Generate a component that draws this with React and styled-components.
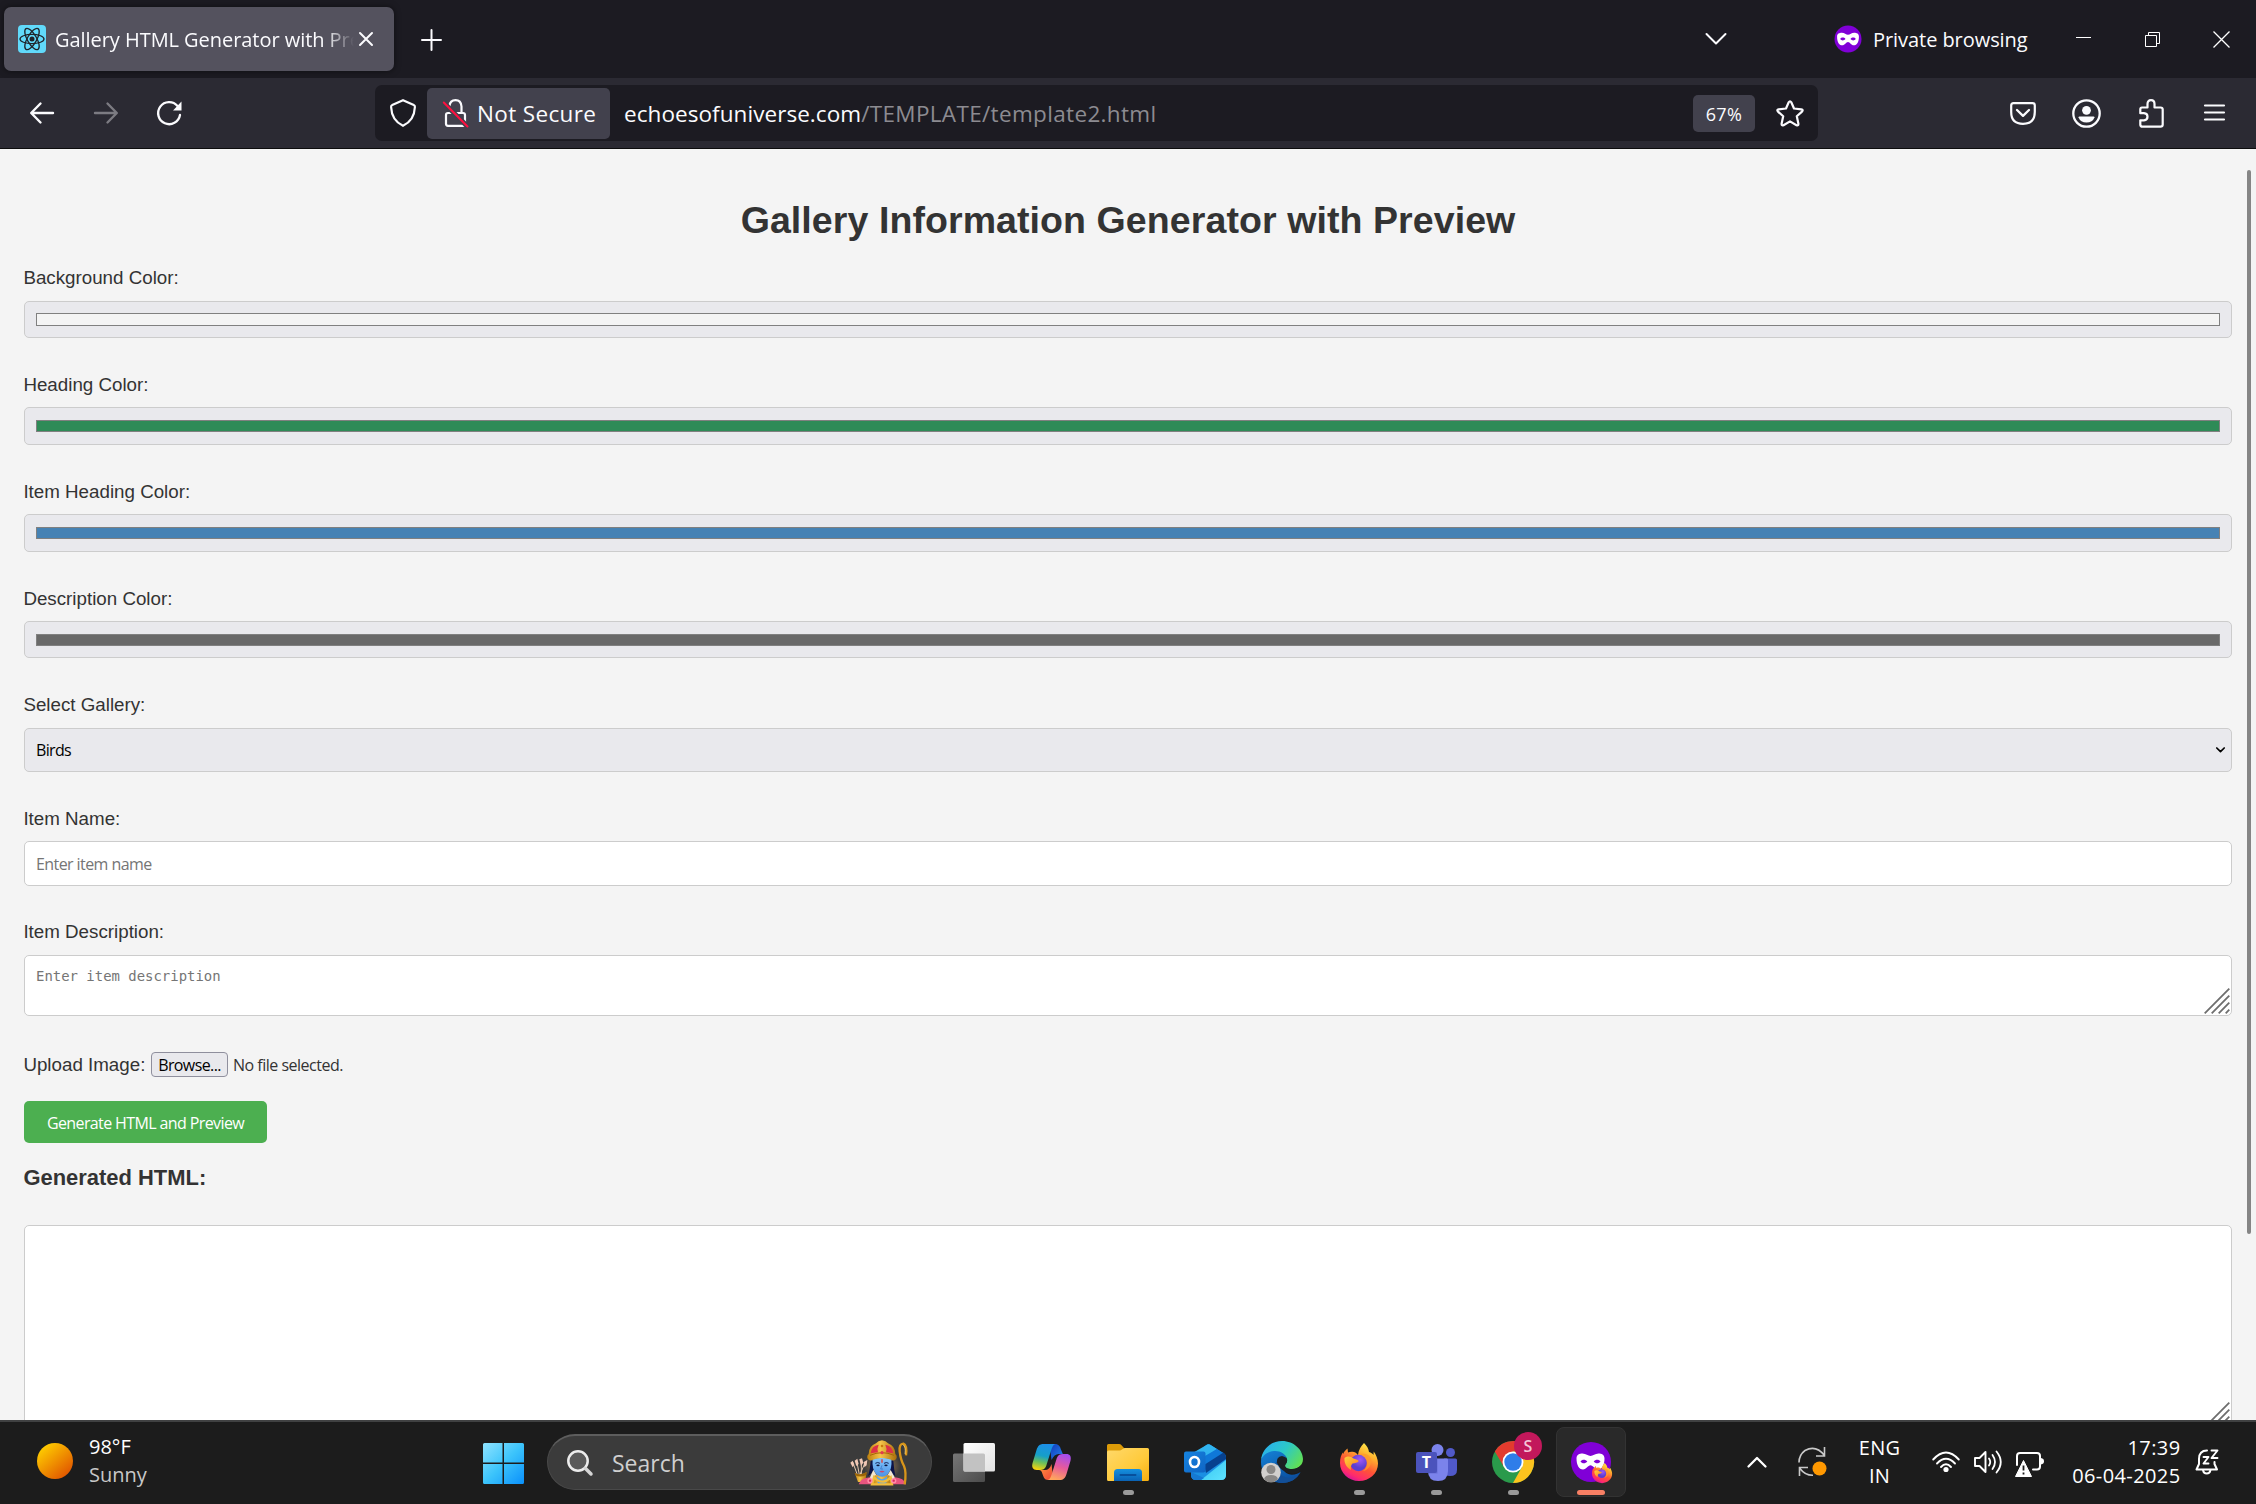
import React from "react";
import styled, { createGlobalStyle } from "styled-components";

const UI = `"Open Sans", "Noto Sans", sans-serif`;
const ARIAL = `"Liberation Sans", Arial, sans-serif`;

const GlobalStyle = createGlobalStyle`
  *, *::before, *::after { box-sizing: border-box; }
  body { margin: 0; background: #1c1c1c; overflow: hidden; }
`;

/* ---------- shell ---------- */

const Screen = styled.div`
  display: flex;
  flex-direction: column;
  width: 2256px;
  height: 1504px;
  overflow: hidden;
  font-family: ${UI};
`;

const Icon = styled.svg`
  display: block;
  flex: none;
  overflow: visible;
  margin-left: ${(p) => p.$ml || 0}px;
  margin-top: ${(p) => p.$mt || 0}px;
`;

/* ---------- title bar ---------- */

const TitleBar = styled.header`
  display: flex;
  align-items: center;
  height: 78px;
  flex: none;
  background: #1c1b22;
  color: #fbfbfe;
`;

const Tab = styled.div`
  display: flex;
  align-items: center;
  width: 390px;
  height: 64px;
  margin-left: 4px;
  padding-left: 14px;
  border-radius: 7px;
  background: #54525e;
  box-shadow: 0 0 6px rgba(0, 0, 0, 0.5);
`;

const TabTitle = styled.span`
  width: 300px;
  margin: 2px 0 0 9px;
  overflow: hidden;
  white-space: nowrap;
  font-size: 20px;
  letter-spacing: -0.05px;
  line-height: 30px;
  mask-image: linear-gradient(to right, #000 270px, transparent 299px);
`;

const PrivateLabel = styled.span`
  width: 155px;
  margin: 1px 0 0 11px;
  white-space: nowrap;
  font-size: 20px;
  letter-spacing: -0.06px;
  line-height: 30px;
`;

/* ---------- navigation bar ---------- */

const NavBar = styled.nav`
  display: flex;
  align-items: center;
  height: 71px;
  flex: none;
  padding-left: 30px;
  background: #2b2a33;
  border-bottom: 1px solid #0c0c0d;
  color: #fbfbfe;
`;

const UrlBar = styled.div`
  display: flex;
  align-items: center;
  width: 1443px;
  height: 56px;
  margin-left: 193px;
  padding: 0 14px 0 15px;
  border-radius: 7px;
  background: #1c1b22;
`;

const SecurityChip = styled.div`
  display: flex;
  align-items: center;
  width: 183px;
  height: 51px;
  margin-left: 11px;
  padding-left: 16px;
  border-radius: 5px;
  background: #42414d;
  font-size: 22.5px;
  line-height: 32px;
  white-space: nowrap;
  letter-spacing: 0.35px;
`;

const ChipText = styled.span`
  margin: 2px 0 0 8px;
`;

const Url = styled.span`
  margin: 2px 0 0 14px;
  font-size: 22.5px;
  line-height: 32px;
  white-space: nowrap;
  letter-spacing: 0.06px;
`;

const UrlPath = styled.span`
  color: #8c8b91;
  letter-spacing: 0.34px;
`;

const ZoomChip = styled.div`
  display: flex;
  align-items: center;
  justify-content: center;
  width: 62px;
  height: 37px;
  margin-left: auto;
  padding-top: 2px;
  border-radius: 5px;
  background: #42414d;
  font-size: 18px;
  letter-spacing: 0.4px;
`;

/* ---------- page ---------- */

const Viewport = styled.main`
  display: flex;
  height: 1271px;
  flex: none;
  overflow: hidden;
  background: #f4f4f4;
  color: #333;
  font-family: ${ARIAL};
`;

const Page = styled.div`
  width: 2232px;
  flex: none;
  padding: 50px 0 0 24px;
`;

const ScrollThumb = styled.div`
  width: 4px;
  height: 1064px;
  margin: 21px 0 0 15px;
  border-radius: 2px;
  background: #858585;
`;

const Title = styled.h1`
  margin: 0 0 26px;
  text-align: center;
  font-size: 37.52px;
  letter-spacing: 0.08px;
  line-height: 42px;
`;

const Field = styled.div`
  margin-bottom: ${(p) => p.$after}px;
`;

const Label = styled.label`
  display: block;
  height: 34px;
  margin-left: -0.6px;
  font-size: 18.76px;
  line-height: ${(p) => (p.$low ? 24 : 22)}px;
`;

const ColorBox = styled.div`
  height: ${(p) => p.$h}px;
  padding: ${(p) => p.$top}px 11px 0;
  border: 1px solid #ccc;
  border-radius: 5px;
  background: #e9e9ed;
`;

const Swatch = styled.div`
  height: ${(p) => p.$h}px;
  border: 1px solid #808080;
  background: ${(p) => p.$color};
`;

const SelectBox = styled.div`
  display: flex;
  align-items: center;
  justify-content: space-between;
  height: 44px;
  padding: 0 6px 0 11px;
  border: 1px solid #ccc;
  border-radius: 5px;
  background: #e9e9ed;
  color: #000;
  font-family: ${UI};
  font-size: 16px;
  letter-spacing: -0.65px;
`;

const TextInput = styled.input`
  display: block;
  width: 100%;
  height: 45px;
  padding: 1px 11px 0;
  border: 1px solid #ccc;
  border-radius: 5px;
  background: #fff;
  font-family: ${UI};
  font-size: 16px;
  letter-spacing: -0.58px;
  &::placeholder { color: #757575; opacity: 1; }
`;

const AreaWrap = styled.div`
  position: relative;
`;

const TextArea = styled.textarea`
  display: block;
  width: 100%;
  height: ${(p) => p.$h}px;
  padding: 11px;
  border: 1px solid #ccc;
  border-radius: 5px;
  background: #fff;
  resize: none;
  overflow: hidden;
  font-family: "DejaVu Sans Mono", monospace;
  font-size: 13.95px;
  line-height: 18px;
  &::placeholder { color: #757575; opacity: 1; }
`;

const Grip = styled.svg`
  position: absolute;
  right: 2px;
  bottom: 2px;
`;

const UploadRow = styled.div`
  display: flex;
  align-items: center;
  height: 25px;
  margin-bottom: 24px;
  font-size: 18.76px;
  line-height: 25px;
`;

const UploadLabel = styled.label`
  width: 127.6px;
  margin-left: -0.6px;
`;

const BrowseButton = styled.button`
  width: 77px;
  height: 25px;
  padding: 0;
  border: 1px solid #8f8f9d;
  border-radius: 4px;
  background: #e9e9ed;
  color: #000;
  font-family: ${UI};
  font-size: 16px;
  line-height: 22px;
  letter-spacing: -0.6px;
`;

const FileStatus = styled.span`
  margin: 1px 0 0 5px;
  font-family: ${UI};
  font-size: 16px;
  letter-spacing: -0.5px;
`;

const GenerateButton = styled.button`
  display: block;
  width: 243px;
  height: 42px;
  padding: 1px 0 0;
  border: 0;
  border-radius: 5px;
  background: #4caf50;
  color: #fff;
  font-family: ${UI};
  font-size: 16px;
  letter-spacing: -0.61px;
  white-space: nowrap;
`;

const SubTitle = styled.h3`
  margin: 22px 0 34px -0.6px;
  font-size: 21.95px;
  line-height: 26px;
`;

/* ---------- task bar ---------- */

const TaskBar = styled.footer`
  display: flex;
  align-items: center;
  height: 84px;
  flex: none;
  padding-bottom: 2px;
  border-top: 2px solid #404142;
  background: #1c1c1c;
  color: #fff;
`;

const Weather = styled.div`
  display: flex;
  align-items: center;
  width: 446px;
  padding-left: 37px;
`;

const Lines = styled.div`
  display: flex;
  flex-direction: column;
  width: ${(p) => p.$w}px;
  margin-left: ${(p) => p.$ml}px;
  margin-top: ${(p) => p.$mt || 0}px;
  align-items: ${(p) => p.$align || "flex-start"};
  font-size: 20px;
  line-height: 28px;
  letter-spacing: ${(p) => p.$ls || 0}px;
  white-space: nowrap;
`;

const Muted = styled.span`
  color: #c8c8c8;
`;

const SearchBox = styled.div`
  display: flex;
  align-items: center;
  width: 385px;
  height: 56px;
  margin-left: 23px;
  padding-left: 19px;
  border: 1px solid #494949;
  border-top: 2px solid #5d5d5d;
  border-radius: 28px;
  background: #3b3b3b;
`;

const SearchText = styled.span`
  width: 238px;
  margin-left: 19px;
  font-size: 23px;
  color: #cfcfcf;
`;

const AppBar = styled.div`
  display: flex;
  align-items: center;
  margin-left: 3.5px;
`;

const AppSlot = styled.div`
  display: flex;
  flex-direction: column;
  align-items: center;
  justify-content: space-between;
  width: ${(p) => (p.$active ? 70 : 77)}px;
  height: 70px;
  margin: ${(p) => (p.$active ? "0 3px 0 4px" : 0)};
  padding: ${(p) => (p.$active ? "13px 0 1px" : "14px 0 2px")};
  border: ${(p) => (p.$active ? "1px solid #333" : "0")};
  border-radius: 8px;
  background: ${(p) => (p.$active ? "#292929" : "transparent")};
`;

const ArtBox = styled.div`
  display: flex;
  align-items: center;
  justify-content: center;
  height: 42px;
`;

const Indicator = styled.span`
  width: ${(p) => p.$w}px;
  height: 5px;
  border-radius: 3px;
  background: ${(p) => p.$color};
`;

/* ---------- drawings ---------- */

const stroke = { fill: "none", stroke: "currentColor", strokeLinecap: "round", strokeLinejoin: "round" };

const MaskShape = ({ cx, cy, s }) => (
  <g transform={`translate(${cx} ${cy}) scale(${s})`}>
    <path
      fill="#fff"
      fillRule="evenodd"
      d="M-14-3C-14-7-11-8-8-8C-4.500-8-2.500-5.500 0-5.500S4.500-8 8-8C11-8 14-7 14-3C14 3.500 11.500 8 7.500 8C4 8 2.500 3.800 0 3.800S-4 8-7.500 8C-11.500 8-14 3.500-14-3ZM-10 0C-8.500-2.400-5-2.400-3.200 0C-5 2.400-8.500 2.400-10 0ZM3.200 0C5-2.400 8.500-2.400 10 0C8.500 2.400 5 2.400 3.200 0Z"
    />
  </g>
);

const FirefoxArt = ({ id }) => (
  <>
    <defs>
      <linearGradient id={`${id}a`} x1=".8" y1="0" x2=".3" y2="1">
        <stop offset="0" stopColor="#fff44f" />
        <stop offset=".3" stopColor="#ffb02e" />
        <stop offset=".6" stopColor="#ff5634" />
        <stop offset=".85" stopColor="#ff2c6b" />
        <stop offset="1" stopColor="#d313a0" />
      </linearGradient>
      <radialGradient id={`${id}b`} cx=".6" cy=".3">
        <stop offset="0" stopColor="#a158f5" />
        <stop offset="1" stopColor="#5b3fd0" />
      </radialGradient>
      <linearGradient id={`${id}c`} x1="0" y1="0" x2="1" y2="1">
        <stop offset="0" stopColor="#ffd23c" />
        <stop offset="1" stopColor="#ff7a1e" />
      </linearGradient>
    </defs>
    <path
      fill={`url(#${id}a)`}
      d="M24 0C27 3 28.500 5.500 29 9C31 9.500 32.500 10.500 33.500 12L33.700 8.500C36 11.500 38 16 38 20.500C38 30.500 29.500 38 19 38S0 30 0 20C0 15 1.200 12 2.800 9.600L3.200 11C4 8.500 5.500 7 7.500 5.500L8 9.500C10 8.500 12 8.500 14 9C16 9.500 17 11 18 12C18.500 7 21 3 24 0Z"
    />
    <circle cx="18.500" cy="20" r="8.300" fill={`url(#${id}b)`} />
    <path fill={`url(#${id}c)`} d="M4.500 15C8 12.500 11 13.500 13.500 15.500C15.500 16.500 17.500 16.500 18.800 18C17.500 20 15 20 12.500 20.500C11 22 10.500 24 11 27C6.500 24.500 4 20 4.500 15Z" />
    <path fill="#ff9a2b" d="M18 12C21 11 25 12.500 26.500 16C28 20 27 25 23 28C29 27 32 21 31 16C29.500 11 23 9.500 18 12Z" opacity=".75" />
  </>
);

const ReactFavicon = () => (
  <Icon width="28" height="28" viewBox="0 0 28 28">
    <rect width="28" height="28" rx="4" fill="#61dafb" />
    <g fill="none" stroke="#20232a" strokeWidth="1.300">
      <ellipse cx="14" cy="14" rx="12" ry="4.600" />
      <ellipse cx="14" cy="14" rx="12" ry="4.600" transform="rotate(60 14 14)" />
      <ellipse cx="14" cy="14" rx="12" ry="4.600" transform="rotate(120 14 14)" />
    </g>
    <circle cx="14" cy="14" r="2.500" fill="#20232a" />
  </Icon>
);

const RamaArt = () => (
  <Icon width="60" height="45" viewBox="0 0 180 135">
    <defs>
      <linearGradient id="gold" x1="0" x2="1">
        <stop offset="0" stopColor="#bd7f0e" />
        <stop offset=".45" stopColor="#f6c44a" />
        <stop offset="1" stopColor="#a96e0a" />
      </linearGradient>
      <radialGradient id="halo">
        <stop offset="0" stopColor="#d8b078" />
        <stop offset=".6" stopColor="#6d5c46" />
        <stop offset="1" stopColor="#3b3b3b" />
      </radialGradient>
      <linearGradient id="skin" x1="0" y1="0" x2="0" y2="1">
        <stop offset="0" stopColor="#86c6f9" />
        <stop offset="1" stopColor="#4b92e8" />
      </linearGradient>
    </defs>
    <ellipse cx="96" cy="78" rx="56" ry="46" fill="url(#halo)" />
    <g stroke="#e8c9ae" strokeWidth="3">
      <path d="M22 104L8 66M28 104L20 62M34 104L34 60M30 104L45 68" />
    </g>
    <path fill="#f0c8b4" d="M1 68L8 62L13 74L8 82ZM14 62L22 56L26 72L19 78ZM28 58L36 55L40 68L33 78ZM41 66L52 60L50 76L43 82Z" />
    <path d="M14 98Q30 108 50 96L46 126H24Z" fill="url(#gold)" />
    <path d="M14 98Q30 108 50 96L49 104Q32 114 16 106Z" fill="#9a6408" />
    <path d="M54 108Q60 90 62 62H130Q132 90 136 108Q126 104 120 90H70Q64 104 54 108Z" fill="#0c1448" />
    <path d="M26 133Q32 114 60 112L78 106H114L134 112Q162 114 168 133Z" fill="#e8557f" />
    <path d="M60 112L70 90L82 110L70 132ZM134 112L122 90L110 110L122 132Z" fill="#efe6d4" />
    <path d="M74 106H118L128 133H64Z" fill="url(#gold)" />
    <path d="M80 108Q96 128 112 108L108 133H84Z" fill="#5aa4ea" />
    <path d="M72 112Q96 138 122 112L126 133H66Z" fill="none" stroke="#f2bd3c" strokeWidth="7" />
    <circle cx="60" cy="122" r="8" fill="#ff8fab" />
    <circle cx="131" cy="122" r="8" fill="#ff8fab" />
    <circle cx="60" cy="122" r="3.500" fill="#d72a5c" />
    <circle cx="131" cy="122" r="3.500" fill="#d72a5c" />
    <path d="M68 58Q96 48 124 58Q127 88 113 103Q96 118 79 103Q65 88 68 58Z" fill="url(#skin)" />
    <path d="M76 70Q83 65 90 70M102 70Q109 65 116 70" stroke="#14245c" strokeWidth="3" fill="none" />
    <ellipse cx="84" cy="76" rx="5" ry="2.800" fill="#0d1740" />
    <ellipse cx="108" cy="76" rx="5" ry="2.800" fill="#0d1740" />
    <path d="M96 58V68" stroke="#e63b2e" strokeWidth="4" />
    <path d="M96 76L92 87H99" stroke="#2d6cc0" strokeWidth="2" fill="none" />
    <path d="M88 94Q96 90 104 94Q96 101 88 94Z" fill="#c84870" />
    <path d="M52 54Q50 46 56 42Q56 18 78 10Q84 2 96 1Q108 2 114 10Q136 18 136 42Q142 46 140 54Q136 64 126 60Q96 48 66 60Q56 64 52 54Z" fill="url(#gold)" />
    <path d="M62 40Q64 18 86 14Q80 26 84 37ZM130 40Q128 18 106 14Q112 26 108 37Z" fill="#dd3047" />
    <path d="M60 46Q96 30 132 46" stroke="#a86608" strokeWidth="3" fill="none" />
    <circle cx="96" cy="38" r="5" fill="#e23b4e" />
    <circle cx="96" cy="18" r="4" fill="#c97a0c" />
    <path d="M168 46Q172 16 160 11Q147 11 149 34Q152 60 162 78Q170 96 164 133" fill="none" stroke="#d8951a" strokeWidth="7" />
    <path d="M165 42Q168 20 159 14" fill="none" stroke="#ffe08a" strokeWidth="2" />
  </Icon>
);

const TaskViewArt = () => (
  <Icon width="42" height="39" viewBox="0 0 42 39">
    <defs>
      <linearGradient id="tv1" x1="0" y1="0" x2="1" y2="1">
        <stop offset="0" stopColor="#fff" />
        <stop offset="1" stopColor="#e2e2e2" />
      </linearGradient>
      <linearGradient id="tv2" x1="0" y1="0" x2="1" y2="1">
        <stop offset="0" stopColor="#767676" />
        <stop offset="1" stopColor="#4c4c4c" />
      </linearGradient>
    </defs>
    <rect y="10.500" width="32" height="28.500" rx="1.500" fill="url(#tv2)" />
    <rect x="10.500" width="31.500" height="28.500" rx="1.500" fill="url(#tv1)" />
    <path d="M10.500 10.500H30.500Q32 10.500 32 12V28.500H12Q10.500 28.500 10.500 27Z" fill="#c2c2c2" />
  </Icon>
);

const CopilotArt = () => (
  <Icon width="39" height="36" viewBox="0 0 116 108">
    <defs>
      <linearGradient id="cp1" x1=".5" y1="0" x2=".3" y2="1">
        <stop offset="0" stopColor="#1c8fe8" />
        <stop offset=".45" stopColor="#169fc8" />
        <stop offset=".7" stopColor="#6abf5c" />
        <stop offset="1" stopColor="#f8d20c" />
      </linearGradient>
      <linearGradient id="cp2" x1=".7" y1="0" x2=".4" y2="1">
        <stop offset="0" stopColor="#a34cf0" />
        <stop offset=".5" stopColor="#e65a9c" />
        <stop offset="1" stopColor="#ffa55c" />
      </linearGradient>
      <linearGradient id="cp3" x1="0" y1="0" x2="1" y2="1">
        <stop offset="0" stopColor="#1238b8" />
        <stop offset="1" stopColor="#2384ee" />
      </linearGradient>
      <linearGradient id="cp4" x1="0" y1="0" x2="1" y2="1">
        <stop offset="0" stopColor="#ff9a3c" />
        <stop offset="1" stopColor="#f0433a" />
      </linearGradient>
    </defs>
    <path d="M52 0H68C80 0 84 8 86 16L92 30H80C70 30 64 36 58 48Z" fill="url(#cp3)" />
    <path d="M64 108H48C36 108 34 98 31 90C29 82 26 78 20 78H38C48 78 54 72 58 60Z" fill="url(#cp4)" />
    <path d="M34 0H70C62 2 60 10 56 22L42 66C38 76 32 78 24 78H14C2 78-2 70 1 58L13 18C17 6 22 0 34 0Z" fill="url(#cp1)" />
    <path d="M82 108H46C54 106 56 98 60 86L74 42C78 32 84 30 92 30H102C114 30 118 38 115 50L103 90C99 102 94 108 82 108Z" fill="url(#cp2)" />
  </Icon>
);

const FolderArt = () => (
  <Icon width="42" height="37" viewBox="0 0 42 37">
    <defs>
      <linearGradient id="fd1" x1="0" y1="0" x2="1" y2="1">
        <stop offset="0" stopColor="#ffd96b" />
        <stop offset=".6" stopColor="#ffca3a" />
        <stop offset="1" stopColor="#f5ae10" />
      </linearGradient>
      <linearGradient id="fd2" x1="0" y1="0" x2="0" y2="1">
        <stop offset="0" stopColor="#1590df" />
        <stop offset="1" stopColor="#0a62b4" />
      </linearGradient>
    </defs>
    <path d="M0 1.500Q0 0 1.500 0H12Q13.500 0 14.500 1.200L17 4V12H0Z" fill="#dc9b08" />
    <path d="M0 8Q0 6.500 1.500 6.500H12.500Q14 6.500 15 5.500T17.500 4H40.500Q42 4 42 5.500V35.500Q42 37 40.500 37H1.500Q0 37 0 35.500Z" fill="url(#fd1)" />
    <path d="M7 37V28.500Q7 25 10.500 25H31.500Q35 25 35 28.500V37Z" fill="url(#fd2)" />
    <path d="M13.500 31H28.500" stroke="#07509c" strokeWidth="2" strokeLinecap="round" />
  </Icon>
);

const AppLetter = styled.text`
  font-family: ${UI};
  font-weight: ${(p) => p.$weight || 700};
  font-size: ${(p) => p.$size}px;
  fill: ${(p) => p.$fill || "#fff"};
  text-anchor: middle;
`;

const OutlookArt = () => (
  <Icon width="42" height="37" viewBox="0 0 42 37">
    <defs>
      <linearGradient id="ol1" x1="0" y1="0" x2="1" y2="1">
        <stop offset="0" stopColor="#35c4f0" />
        <stop offset="1" stopColor="#5fe3ff" />
      </linearGradient>
      <linearGradient id="ol2" x1="0" y1="0" x2="1" y2="1">
        <stop offset="0" stopColor="#1684e0" />
        <stop offset="1" stopColor="#0f64c4" />
      </linearGradient>
    </defs>
    <path d="M7 14L22 1.200Q24.500-.8 27 1.200L40 9.500Q42 11 42 13V31Q42 36 37 36H12Q7 36 7 31Z" fill="#1a8fe3" />
    <path d="M7 10L22 1.200Q24.500-.8 27 1.200L33 5L14 18H7Z" fill="#31b4ef" />
    <path d="M14 16L33 5L40 9.500L20 24Z" fill="#0f78d8" />
    <path d="M20 21L39.500 8.500Q42 10 42 13V15L22 29Z" fill="#07418f" />
    <path d="M17 36L42 16V31Q42 36 37 36Z" fill="url(#ol1)" />
    <path d="M7 28L20 34L17 36H12Q7 36 7 31Z" fill="#1679d3" />
    <rect y="7.500" width="21.500" height="21" rx="2" fill="url(#ol2)" />
    <ellipse cx="10.500" cy="18" rx="4.500" ry="5" fill="none" stroke="#fff" strokeWidth="2.600" />
  </Icon>
);

const EdgeArt = () => (
  <Icon width="42" height="42" viewBox="0 0 42 42">
    <defs>
      <linearGradient id="eg1" x1="0" y1=".2" x2="1" y2=".7">
        <stop offset="0" stopColor="#29aef0" />
        <stop offset=".5" stopColor="#2cc8c8" />
        <stop offset="1" stopColor="#62e052" />
      </linearGradient>
      <linearGradient id="eg2" x1="0" y1="0" x2=".6" y2="1">
        <stop offset="0" stopColor="#1583d8" />
        <stop offset="1" stopColor="#0a4fa0" />
      </linearGradient>
    </defs>
    <path d="M0 21C0 12 8 8 16 9C24 10 27 15 25 18C22 22 20 26 24 31C29 36 37 33 39.500 31C36 38 29 42 21 42C9 42 0 33 0 21Z" fill="url(#eg2)" />
    <path d="M16 20C14 28 18 36 28 37C33 37 37 34 39.500 31C36 38 29 42 21 42C12 42 10 28 16 20Z" fill="#124f98" />
    <path d="M0 19C1 8 10 0 21 0C33 0 42 9 42 18C42 25 36 28 31 28C27 28 24 27 24 25C24 23 27 22 26 18C25 13 19 9.500 13 10C7 10.500 2 14 0 19Z" fill="url(#eg1)" />
    <path d="M16 22Q15 16 21 15Q26 16 26 19Q26 22 24 24Q24 27 28 28Q36 29 40 24Q39 29 38 31Q30 35 23 30Q18 27 16 22Z" fill="#1c2023" />
    <circle cx="10" cy="31.500" r="9.800" fill="#d2d0ce" />
    <circle cx="10" cy="28.500" r="4.500" fill="#8a8886" />
    <path d="M3 38.200Q4 34 10 34T17 38.200Q14 41.300 10 41.300T3 38.200Z" fill="#8a8886" />
  </Icon>
);

const FirefoxIcon = () => (
  <Icon width="38" height="38" viewBox="0 0 38 38" $mt={-1}>
    <FirefoxArt id="ff" />
  </Icon>
);

const TeamsArt = () => (
  <Icon width="41" height="37" viewBox="0 0 41 37" $mt={1}>
    <circle cx="34.500" cy="8.500" r="4.500" fill="#5059c9" />
    <path d="M28 14.500H39.500Q41 14.500 41 16V26Q41 32 34 32Q28 32 28 26Z" fill="#5059c9" />
    <circle cx="21.500" cy="6" r="6" fill="#7b83eb" />
    <path d="M12 14.500H31Q32 14.500 32 16V27Q32 37 22 37T12 27Z" fill="#7b83eb" />
    <path d="M12 14.500H21.500V29.500H12.300Q12 28 12 27Z" fill="#5a62c8" opacity=".6" />
    <rect y="8" width="21" height="21" rx="2" fill="#4b53bc" />
    <AppLetter x="10.500" y="24" $size={16}>T</AppLetter>
  </Icon>
);

const ChromeArt = () => (
  <Icon width="42" height="42" viewBox="0 0 42 42">
    <circle cx="21" cy="21" r="21" fill="#2a9a4b" />
    <path d="M2.800 10.500A21 21 0 0 1 39.200 10.500H21L12 26Z" fill="#e33b2e" />
    <path d="M39.200 10.500A21 21 0 0 1 21 42L30 26L21 10.500Z" fill="#fcc31e" />
    <circle cx="21" cy="21" r="10.500" fill="#fff" />
    <circle cx="21" cy="21" r="8.700" fill="#2f7de9" />
    <circle cx="36" cy="5" r="14" fill="#c2185b" />
    <AppLetter x="36" y="11" $size={16} $weight={600} $fill="#f4c5d7">S</AppLetter>
  </Icon>
);

const PrivateArt = () => (
  <Icon width="40" height="42" viewBox="0 0 40 42">
    <circle cx="20" cy="21" r="20" fill="#8000d7" />
    <MaskShape cx={19.500} cy={20.500} s={1} />
    <g transform="translate(21 22) scale(.53)">
      <FirefoxArt id="fp" />
    </g>
  </Icon>
);

/* ---------- sections ---------- */

function BrowserTitleBar() {
  return (
    <TitleBar>
      <Tab>
        <ReactFavicon />
        <TabTitle>Gallery HTML Generator with Preview</TabTitle>
        <Icon width="14" height="14" viewBox="0 0 14 14" $ml={4}>
          <path d="M1 1L13 13M13 1L1 13" {...stroke} strokeWidth="2" />
        </Icon>
      </Tab>
      <Icon width="21" height="22" viewBox="0 0 21 22" $ml={27} $mt={2}>
        <path d="M10.500 1V21M1 11H20" {...stroke} strokeWidth="2" />
      </Icon>
      <Icon width="22" height="12" viewBox="0 0 22 12" $ml={1263}>
        <path d="M1.500 1L11 10.500L20.500 1" {...stroke} strokeWidth="2" />
      </Icon>
      <Icon width="28" height="28" viewBox="0 0 28 28" $ml={107}>
        <circle cx="14" cy="14" r="13.500" fill="#8000d7" />
        <MaskShape cx={14} cy={14} s={0.78} />
      </Icon>
      <PrivateLabel>Private browsing</PrivateLabel>
      <Icon width="15" height="1" viewBox="0 0 15 1" $ml={48} $mt={-3}>
        <path d="M0 .5H15" stroke="#fff" />
      </Icon>
      <Icon width="15" height="15" viewBox="0 0 15 15" $ml={54}>
        <path d="M.5 3.500H11.500V14.500H.5ZM3.500 3V.5H14.500V11.500H12" fill="none" stroke="#fff" />
      </Icon>
      <Icon width="17" height="17" viewBox="0 0 17 17" $ml={53}>
        <path d="M.5 .5L16.500 16.500M16.500 .5L.5 16.500" fill="none" stroke="#fff" strokeWidth="1.300" />
      </Icon>
    </TitleBar>
  );
}

function BrowserNavBar() {
  return (
    <NavBar>
      <Icon width="24" height="22" viewBox="0 0 24 22">
        <path d="M23 11H1.500M10.500 1.500L1.200 11L10.500 20.500" {...stroke} strokeWidth="2.400" />
      </Icon>
      <Icon width="24" height="22" viewBox="0 0 24 22" $ml={40} color="#7c7b82">
        <path d="M1 11H22.500M13.500 1.500L22.800 11L13.500 20.500" {...stroke} strokeWidth="2.400" />
      </Icon>
      <Icon width="25" height="25" viewBox="0 0 25 25" $ml={39}>
        <path d="M20.500 5A11 11 0 1 0 23 14" {...stroke} strokeWidth="2.300" />
        <path d="M24.500 .5V9.500H16Z" fill="currentColor" />
      </Icon>
      <UrlBar>
        <Icon width="26" height="28" viewBox="0 0 26 28">
          <path d="M13 1.200L23.800 6Q25 6.500 24.900 8Q24.300 21.500 13 26.800Q1.700 21.500 1.100 8Q1 6.500 2.200 6Z" {...stroke} strokeWidth="2.200" />
        </Icon>
        <SecurityChip>
          <Icon width="26" height="28" viewBox="0 0 26 28">
            <rect x="3" y="14" width="19" height="12.800" rx="2" {...stroke} strokeWidth="2.200" />
            <path d="M6.500 7Q7 1.200 12.500 1.200T18.500 7.500V14" {...stroke} strokeWidth="2.200" />
            <path d="M1 4L24.500 27.500" stroke="#42414d" strokeWidth="5" />
            <path d="M.8 3.500L24.500 27.500" stroke="#ff0f3f" strokeWidth="2" strokeLinecap="round" />
          </Icon>
          <ChipText>Not Secure</ChipText>
        </SecurityChip>
        <Url>
          echoesofuniverse.com<UrlPath>/TEMPLATE/template2.html</UrlPath>
        </Url>
        <ZoomChip>67%</ZoomChip>
        <Icon width="28" height="27" viewBox="0 0 28 27" $ml={21}>
          <path
            d="M12.700 2.300Q14 .2 15.300 2.300L18 8.500L25.300 9.300Q27.600 9.800 26 11.600L20.800 16.300L22.400 23.700Q22.600 26 20.500 25.200L14 21.400L7.500 25.200Q5.400 26 5.600 23.700L7.200 16.300L2 11.600Q.4 9.800 2.700 9.300L10 8.500Z"
            {...stroke}
            strokeWidth="2.200"
          />
        </Icon>
      </UrlBar>
      <Icon width="26" height="23" viewBox="0 0 26 23" $ml={192}>
        <path d="M3.500 1.200H22.500Q24.800 1.200 24.800 3.500V10Q24.800 21.800 13 21.800T1.200 10V3.500Q1.200 1.200 3.500 1.200Z" {...stroke} strokeWidth="2.200" />
        <path d="M7 8L13 13.800L19 8" {...stroke} strokeWidth="2.300" />
      </Icon>
      <Icon width="29" height="29" viewBox="0 0 29 29" $ml={36}>
        <circle cx="14.500" cy="14.500" r="13.200" {...stroke} strokeWidth="2.300" />
        <circle cx="14.500" cy="11.300" r="4.400" fill="currentColor" />
        <path d="M6.500 18.500Q6.500 17.500 7.500 17.500H21.500Q22.500 17.500 22.500 18.500Q20.500 23.500 14.500 23.500T6.500 18.500Z" fill="currentColor" />
      </Icon>
      <Icon width="25" height="29" viewBox="0 0 25 29" $ml={38}>
        <path
          d="M3 8.500H8.500V5Q8.500 1.200 12 1.200T15.500 5V8.500H21.500Q23.700 8.500 23.700 10.500V25.500Q23.700 27.700 21.500 27.700H3.500Q1.300 27.700 1.300 25.500V21.300H5Q8.500 21 8.500 17.700T5 14.200H1.300V10.500Q1.300 8.500 3 8.500Z"
          {...stroke}
          strokeWidth="2.200"
        />
      </Icon>
      <Icon width="21" height="17" viewBox="0 0 21 17" $ml={40} $mt={-1}>
        <path d="M1 1.500H20M1 8.500H20M1 15.500H20" {...stroke} strokeWidth="2.200" />
      </Icon>
    </NavBar>
  );
}

const colors = [
  { label: "Background Color:", color: "#f4f4f4", h: 37, top: 11, sh: 13, after: 35, low: false },
  { label: "Heading Color:", color: "#2e8b57", h: 38, top: 12, sh: 12, after: 35, low: true },
  { label: "Item Heading Color:", color: "#4682b4", h: 38, top: 12, sh: 12, after: 35, low: true },
  { label: "Description Color:", color: "#696969", h: 37, top: 12, sh: 12, after: 36, low: true },
];

const ResizeGrip = () => (
  <Grip width="26" height="26" viewBox="0 0 26 26">
    <path d="M.7 25.300L25.300 .7M7.700 25.300L25.300 7.700M14.700 25.300L25.300 14.700M21.700 25.300L25.300 21.700" stroke="#6e6e6e" strokeWidth="1.800" />
  </Grip>
);

function GalleryPage() {
  return (
    <Viewport>
      <Page>
        <Title>Gallery Information Generator with Preview</Title>
        {colors.map((c) => (
          <Field key={c.label} $after={c.after}>
            <Label $low={c.low}>{c.label}</Label>
            <ColorBox $h={c.h} $top={c.top}>
              <Swatch $color={c.color} $h={c.sh} />
            </ColorBox>
          </Field>
        ))}
        <Field $after={35}>
          <Label>Select Gallery:</Label>
          <SelectBox>
            Birds
            <Icon width="9" height="6" viewBox="0 0 9 6">
              <path d="M.8 1L4.500 4.700L8.200 1" {...stroke} strokeWidth="1.700" />
            </Icon>
          </SelectBox>
        </Field>
        <Field $after={35}>
          <Label $low>Item Name:</Label>
          <TextInput placeholder="Enter item name" />
        </Field>
        <Field $after={36}>
          <Label>Item Description:</Label>
          <AreaWrap>
            <TextArea $h={61} placeholder="Enter item description" />
            <ResizeGrip />
          </AreaWrap>
        </Field>
        <UploadRow>
          <UploadLabel>Upload Image:</UploadLabel>
          <BrowseButton>Browse...</BrowseButton>
          <FileStatus>No file selected.</FileStatus>
        </UploadRow>
        <GenerateButton>Generate HTML and Preview</GenerateButton>
        <SubTitle>Generated HTML:</SubTitle>
        <AreaWrap>
          <TextArea $h={205} />
          <ResizeGrip />
        </AreaWrap>
      </Page>
      <ScrollThumb />
    </Viewport>
  );
}

const apps = [
  { name: "tasks", Art: TaskViewArt },
  { name: "copilot", Art: CopilotArt },
  { name: "files", Art: FolderArt, open: true },
  { name: "mail", Art: OutlookArt },
  { name: "edge", Art: EdgeArt },
  { name: "firefox", Art: FirefoxIcon, open: true },
  { name: "teams", Art: TeamsArt, open: true },
  { name: "chrome", Art: ChromeArt, open: true },
  { name: "private", Art: PrivateArt, open: true, active: true },
];

function WindowsTaskBar() {
  return (
    <TaskBar>
      <Weather>
        <Icon width="36" height="36" viewBox="0 0 36 36" $mt={-3}>
          <defs>
            <linearGradient id="sun" x1=".1" y1=".1" x2=".8" y2=".9">
              <stop offset="0" stopColor="#ffd000" />
              <stop offset="1" stopColor="#e25a00" />
            </linearGradient>
          </defs>
          <circle cx="18" cy="18" r="18" fill="url(#sun)" />
        </Icon>
        <Lines $w={80} $ml={16} $mt={-2}>
          <span>98°F</span>
          <Muted>Sunny</Muted>
        </Lines>
      </Weather>
      <Icon width="41" height="41" viewBox="0 0 41 41" $ml={37} $mt={2}>
        <defs>
          <linearGradient id="win" gradientUnits="userSpaceOnUse" x1="0" y1="0" x2="41" y2="41">
            <stop offset="0" stopColor="#8fe3ff" />
            <stop offset=".5" stopColor="#3cc4fb" />
            <stop offset="1" stopColor="#0a90fb" />
          </linearGradient>
        </defs>
        <path fill="url(#win)" d="M1.500 0H19.500V19.500H0V1.500Q0 0 1.500 0ZM21 0H39.500Q41 0 41 1.500V19.500H21ZM0 21H19.500V41H1.500Q0 41 0 39.500ZM21 21H41V39.500Q41 41 39.500 41H21Z" />
      </Icon>
      <SearchBox>
        <Icon width="26" height="26" viewBox="0 0 26 26">
          <circle cx="11" cy="11" r="9.700" fill="#5a5a5a" stroke="#ececec" strokeWidth="2.500" />
          <path d="M18.500 18.500L24 24" stroke="#d5d5d5" strokeWidth="3.500" strokeLinecap="round" />
        </Icon>
        <SearchText>Search</SearchText>
        <RamaArt />
      </SearchBox>
      <AppBar>
        {apps.map(({ name, Art, open, active }) => (
          <AppSlot key={name} $active={active}>
            <ArtBox>
              <Art />
            </ArtBox>
            {open && <Indicator $w={active ? 28 : 11} $color={active ? "#f77f64" : "#9a9a9a"} />}
          </AppSlot>
        ))}
      </AppBar>
      <Icon width="20" height="12" viewBox="0 0 20 12" $ml={118}>
        <path d="M1.500 10.500L10 2L18.500 10.500" {...stroke} strokeWidth="2.300" />
      </Icon>
      <Icon width="30" height="30" viewBox="0 0 30 30" $ml={31}>
        <g fill="none" stroke="#c9c9c9" strokeWidth="1.600">
          <path d="M1 15.500Q1 8 7 3.500Q18-2.500 26.500 8.500M26.500 0V9H18" />
          <path d="M1.500 29V20.500H10M2 21.500Q7 28.500 15 28.300" />
        </g>
        <circle cx="21.500" cy="21.500" r="7" fill="#ff9800" />
      </Icon>
      <Lines $w={60} $ml={22} $align="center" $ls={0.2}>
        <span>ENG</span>
        <span>IN</span>
      </Lines>
      <Icon width="28" height="22" viewBox="0 0 28 22" $ml={22}>
        <path d="M1.200 8.500Q14-5.500 26.800 8.500M5 12.500Q14 3 23 12.500M9 16Q14 10.500 19 16" {...stroke} strokeWidth="1.900" />
        <circle cx="14" cy="18.500" r="2.600" fill="currentColor" />
      </Icon>
      <Icon width="28" height="24" viewBox="0 0 28 24" $ml={14}>
        <path d="M1 8H5.500L11.500 2V22L5.500 16H1Z" {...stroke} strokeWidth="1.900" />
        <path d="M15 8.500Q17.500 12 15 15.500M18.500 5Q23.500 12 18.500 19M22.500 1.500Q31 12 22.500 22.500" {...stroke} strokeWidth="1.800" />
      </Icon>
      <Icon width="28" height="25" viewBox="0 0 28 25" $ml={14} $mt={4}>
        <path d="M1 13V4Q1 1 4 1H21Q24 1 24 4V14.500Q24 17.500 21 17.500H17" {...stroke} strokeWidth="2" />
        <path d="M25 6Q28 6.500 28 9.200T25 12.500Z" fill="currentColor" />
        <path d="M7.500 8.500L15.500 24.500H-.5Z" fill="#fff" stroke="#fff" strokeLinejoin="round" />
        <path d="M7.500 13.500V18.500M7.500 20.500V22.500" stroke="#1c1c1c" strokeWidth="1.800" />
      </Icon>
      <Lines $w={120} $ml={17} $mt={-1} $align="flex-end" $ls={0.4}>
        <span>17:39</span>
        <span>06-04-2025</span>
      </Lines>
      <Icon width="24" height="26" viewBox="0 0 24 26" $ml={14}>
        <path d="M12 1.500Q4 1.500 4 10V15L1.500 20.500H22L19.500 15V13" {...stroke} strokeWidth="2" />
        <path d="M8 21Q8.500 24.500 11.700 24.500T15.500 21" {...stroke} strokeWidth="1.900" />
        <path d="M8.500 8H13.500L8.500 14.500H13.500" {...stroke} strokeWidth="1.900" />
        <path d="M16.500 1.500H22.500L16.500 9H22.500" {...stroke} strokeWidth="1.900" />
      </Icon>
    </TaskBar>
  );
}

export default function App() {
  return (
    <>
      <GlobalStyle />
      <Screen>
        <BrowserTitleBar />
        <BrowserNavBar />
        <GalleryPage />
        <WindowsTaskBar />
      </Screen>
    </>
  );
}
